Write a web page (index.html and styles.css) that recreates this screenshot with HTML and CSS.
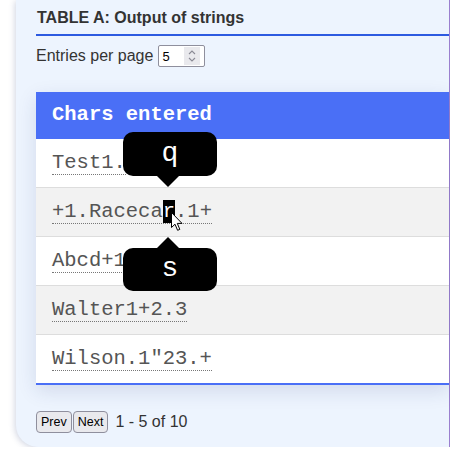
FILE: index.html
```html
<!DOCTYPE html>
<html lang="en">
<head>
<meta charset="utf-8">
<title>Output of strings</title>
<link rel="stylesheet" href="styles.css">
</head>
<body>
<div class="card">
  <h2 class="title">TABLE A: Output of strings</h2>
  <div class="controls">
    <span class="label">Entries per page</span>
    <span class="num">
      <span class="num-val">5</span>
      <span class="spin">
        <svg width="10" height="14" viewBox="0 0 10 14"><path d="M2 5 L5 2 L8 5" fill="none" stroke="#8a8a95" stroke-width="1.1"/><path d="M2 9 L5 12 L8 9" fill="none" stroke="#8a8a95" stroke-width="1.1"/></svg>
      </span>
    </span>
  </div>
  <div class="table-wrap">
    <table class="strings">
      <thead><tr><th>Chars entered</th></tr></thead>
      <tbody>
        <tr><td><span class="str">Test1.</span></td></tr>
        <tr class="alt"><td><span class="str">+1.Raceca<span class="hl">r</span>.1+</span></td></tr>
        <tr><td><span class="str">Abcd+1</span></td></tr>
        <tr class="alt"><td><span class="str">Walter1+2.3</span></td></tr>
        <tr class="last"><td><span class="str">Wilson.1"23.+</span></td></tr>
      </tbody>
    </table>
    <div class="tip tip-q">q</div>
    <div class="tip tip-s">s</div>
    <svg class="cursor" width="13" height="20" viewBox="0 0 13 20"><path d="M0.5 0.5 L0.5 15.5 L4 12.2 L6.6 18.3 L8.8 17.4 L6.3 11.4 L11 11.4 Z" fill="#fff" stroke="#000" stroke-width="1" stroke-linejoin="round"/></svg>
  </div>
  <div class="pager">
    <button class="btn">Prev</button><button class="btn">Next</button>
    <span class="count">1 - 5 of 10</span>
  </div>
</div>
</body>
</html>
```
FILE: styles.css
```css
html, body {
  margin: 0;
  padding: 0;
  background: #ffffff;
}

body {
  font-family: "Liberation Sans", Arial, sans-serif;
  color: #333333;
}

.card {
  margin-left: 16px;
  width: 434px;
  box-sizing: border-box;
  background: #edf4fe;
  border-right: 1px solid #9a7fcf;
  border-radius: 0 0 0 22px;
  box-shadow: -1px 1px 6px rgba(40, 60, 120, 0.22);
  padding: 8px 0 14px 20px;
}

.title {
  margin: 0;
  font-size: 16px;
  font-weight: bold;
  line-height: 20px;
  color: #333333;
  padding: 0 0 6px 1px;
  border-bottom: 2px solid #2d5ae0;
}

.controls {
  margin-top: 9px;
  display: flex;
  align-items: center;
  height: 22px;
}

.label {
  font-size: 16px;
  line-height: 18px;
  color: #333333;
}

.num {
  margin-left: 5px;
  width: 47px;
  height: 22px;
  box-sizing: border-box;
  border: 1px solid #8f8f9d;
  border-radius: 2px;
  background: #ffffff;
  display: flex;
  align-items: center;
  justify-content: space-between;
  padding: 0 4px 0 3px;
}

.num-val {
  font-size: 13px;
  color: #000000;
}

.spin {
  width: 16px;
  height: 18px;
  background: #e9e9ed;
  display: flex;
  align-items: center;
  justify-content: center;
}

.table-wrap {
  position: relative;
  margin-top: 25px;
}

.strings {
  width: 100%;
  border-collapse: separate;
  border-spacing: 0;
  background: #ffffff;
  box-shadow: 0 6px 18px rgba(30, 50, 110, 0.13);
  font-family: "Liberation Mono", "Courier New", monospace;
  font-size: 20.5px;
}

.strings th {
  background: #4a6ff6;
  color: #ffffff;
  font-weight: bold;
  text-align: left;
  padding: 11px 16px 12px;
  line-height: 24px;
}

.strings td {
  padding: 12px 16px;
  line-height: 24px;
  border-bottom: 1px solid #dddddd;
  color: #555555;
}

.strings tr.alt td {
  background: #f2f2f2;
}

.strings tr.last td {
  border-bottom: 2px solid #4a6ff6;
}

.str {
  border-bottom: 1px dotted #777777;
}

.hl {
  background: #000000;
  color: #ffffff;
}

.tip {
  position: absolute;
  left: 87px;
  width: 94px;
  height: 44px;
  background: #000000;
  color: #ffffff;
  border-radius: 10px;
  font-family: "Liberation Mono", "Courier New", monospace;
  font-size: 28px;
  line-height: 44px;
  text-align: center;
}

.tip::after {
  content: "";
  position: absolute;
  left: 34px;
  border-left: 11px solid transparent;
  border-right: 11px solid transparent;
}

.tip-q {
  top: 40px;
}

.tip-q::after {
  top: 44px;
  border-top: 11px solid #000000;
}

.tip-s {
  top: 156px;
  height: 43px;
  line-height: 42px;
}

.tip-s::after {
  top: -11px;
  border-bottom: 11px solid #000000;
}

.cursor {
  position: absolute;
  left: 135px;
  top: 120px;
}

.pager {
  margin-top: 26px;
  display: flex;
  align-items: center;
  height: 22px;
}

.btn {
  font-family: "Liberation Sans", Arial, sans-serif;
  font-size: 12.5px;
  color: #000000;
  background: #e9e9ed;
  border: 1px solid #8f8f9d;
  border-radius: 4px;
  height: 22px;
  padding: 0 4px;
  margin: 0 1px 0 0;
}

.count {
  margin-left: 6px;
  font-size: 16px;
  color: #333333;
}
```
